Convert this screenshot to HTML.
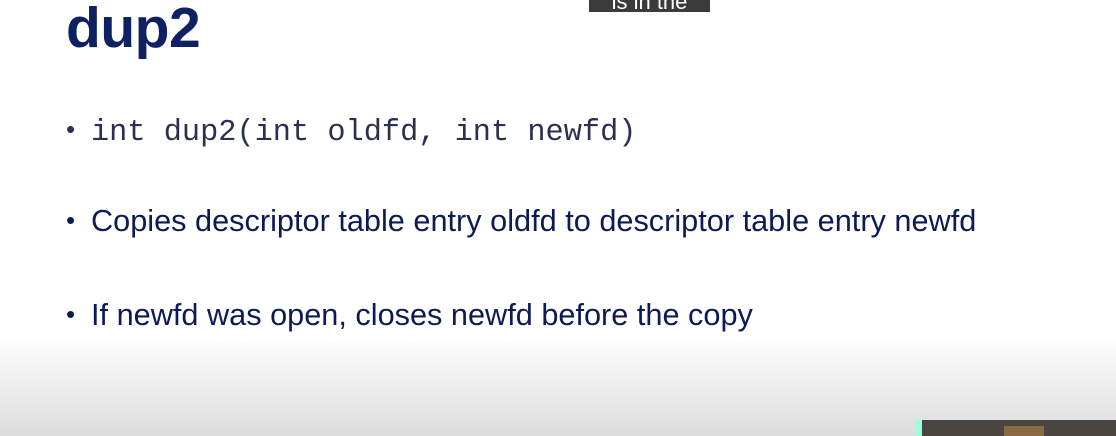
<!DOCTYPE html>
<html><head><style>
body{margin:0;width:1116px;height:436px;overflow:hidden;background:#fff;position:relative;font-family:"Liberation Sans",sans-serif;color:#0d1b55}
.t{position:absolute;left:66px;top:-5px;font-size:57px;font-weight:bold;color:#0f2163;letter-spacing:-0.5px}
.b{position:absolute;left:66px;font-size:30.7px;white-space:nowrap}
.b span{display:inline-block;width:25px;font-size:26px;vertical-align:2px}
.m{font-family:"Liberation Mono",monospace;font-size:30.3px;color:#2a3050;letter-spacing:0}
.grad{position:absolute;left:0;top:335px;width:1116px;height:101px;background:linear-gradient(#fff,#dcdcdc)}
.cap{position:absolute;left:589px;top:-9px;width:121px;height:21px;background:#3b3b3b;color:#fff;font-size:22px;line-height:21px;text-align:center}
.vid{position:absolute;left:916px;top:420px;width:200px;height:16px;background:#4a4540}
</style></head><body>
<div class="grad"></div>
<div class="t">dup2</div>
<div class="cap">is in the</div>
<div class="b m" style="top:114px"><span style="font-family:'Liberation Sans'">•</span>int dup2(int oldfd, int newfd)</div>
<div class="b" style="top:203px"><span>•</span>Copies descriptor table entry oldfd to descriptor table entry newfd</div>
<div class="b" style="top:297px"><span>•</span>If newfd was open, closes newfd before the copy</div>
<div class="vid"><div style="position:absolute;left:0;width:6px;height:16px;background:#9fd"></div><div style="position:absolute;left:88px;top:6px;width:40px;height:10px;background:#8a6a40"></div></div>
</body></html>
